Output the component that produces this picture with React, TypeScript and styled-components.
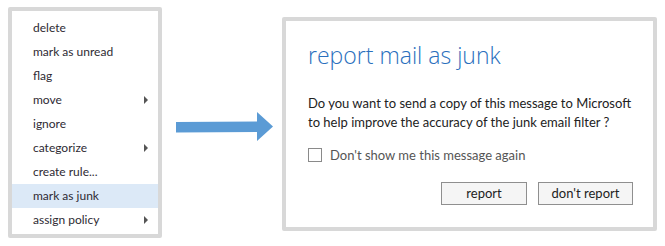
import React from 'react';
import { useState } from 'react';
import styled, { createGlobalStyle } from 'styled-components';

const GlobalStyle = createGlobalStyle`
  html, body {
    margin: 0;
    padding: 0;
    background: #fff;
  }
  body {
    font-family: Lato, 'Open Sans', Arial, sans-serif;
    color: #2b2b2b;
  }
`;

interface MenuEntry {
  label: string;
  sub?: boolean;
}

const items: MenuEntry[] = [
  { label: 'delete' },
  { label: 'mark as unread' },
  { label: 'flag' },
  { label: 'move', sub: true },
  { label: 'ignore' },
  { label: 'categorize', sub: true },
  { label: 'create rule...' },
  { label: 'mark as junk' },
  { label: 'assign policy', sub: true },
];

const App: React.FC = () => {
  const [hovered] = useState('mark as junk');
  const [dontShow, setDontShow] = useState(false);

  return (
    <Page>
      <GlobalStyle />
      <Menu>
        {items.map((item) => (
          <MenuItem key={item.label} $active={item.label === hovered}>
            <span>{item.label}</span>
            {item.sub && <Caret />}
          </MenuItem>
        ))}
      </Menu>

      <ArrowBox>
        <svg width='98' height='30' viewBox='0 0 98 30'>
          <polygon
            points='0,10 81,9.5 81,0 97,14.5 81,29 81,20 0,20.5'
            fill='#5b9bd5'
          />
        </svg>
      </ArrowBox>

      <Dialog>
        <Title>report mail as junk</Title>
        <Body>
          Do you want to send a copy of this message to Microsoft
          <br />
          to help improve the accuracy of the junk email filter ?
        </Body>
        <CheckRow onClick={() => setDontShow(!dontShow)}>
          <Box>{dontShow ? '✓' : ''}</Box>
          <span>Don't show me this message again</span>
        </CheckRow>
        <Actions>
          <Button $w={86}>report</Button>
          <Button $w={95}>don't report</Button>
        </Actions>
      </Dialog>
    </Page>
  );
};

const Page = styled.div`
  display: flex;
  align-items: flex-start;
  width: 665px;
  height: 246px;
  padding: 7px 0 0 8px;
  box-sizing: border-box;
`;

const Menu = styled.ul`
  list-style: none;
  margin: 0;
  width: 154px;
  box-sizing: border-box;
  border: 4px solid #d8d8d8;
  border-radius: 2px;
  padding: 5px 0 2px;
  background: #fff;
`;

const MenuItem = styled.li<{ $active?: boolean }>`
  display: flex;
  align-items: center;
  justify-content: space-between;
  height: 24px;
  padding: 0 10px 1px 21px;
  box-sizing: border-box;
  font-size: 12px;
  color: #2e2a33;
  background: ${(p) => (p.$active ? '#dce9f7' : 'transparent')};
`;

const Caret = styled.i`
  width: 0;
  height: 0;
  border-top: 4px solid transparent;
  border-bottom: 4px solid transparent;
  border-left: 4px solid #555;
`;

const ArrowBox = styled.div`
  width: 120px;
  display: flex;
  justify-content: flex-start;
  padding: 105px 0 0 14px;
  box-sizing: border-box;
  svg {
    display: block;
  }
`;

const Dialog = styled.div`
  margin-top: 10px;
  width: 375px;
  height: 214px;
  box-sizing: border-box;
  border: 4px solid #d8d8d8;
  border-radius: 2px;
  padding: 18px 20px 0 22px;
  background: #fff;
`;

const Title = styled.h1`
  margin: 0;
  font-family: 'Open Sans', Lato, sans-serif;
  font-weight: 300;
  font-size: 23px;
  line-height: 32px;
  color: #2a6fbd;
`;

const Body = styled.p`
  margin: 23px 0 0;
  font-size: 13px;
  line-height: 19px;
  white-space: nowrap;
  color: #222;
`;

const CheckRow = styled.label`
  display: flex;
  align-items: center;
  gap: 8px;
  height: 18px;
  margin-top: 14px;
  font-size: 13px;
  color: #555;
`;

const Box = styled.span`
  width: 14px;
  height: 14px;
  box-sizing: border-box;
  border: 1px solid #8a8a8a;
  background: #fff;
  font-size: 11px;
  line-height: 12px;
  text-align: center;
`;

const Actions = styled.div`
  display: flex;
  justify-content: flex-end;
  gap: 11px;
  margin-top: 18px;
`;

const Button = styled.button<{ $w: number }>`
  width: ${(p) => p.$w}px;
  height: 23px;
  padding: 0 0 1px;
  border: 1px solid #8f8f8f;
  background: #f5f5f5;
  font-family: inherit;
  font-size: 13px;
  color: #222;
`;

export default App;
